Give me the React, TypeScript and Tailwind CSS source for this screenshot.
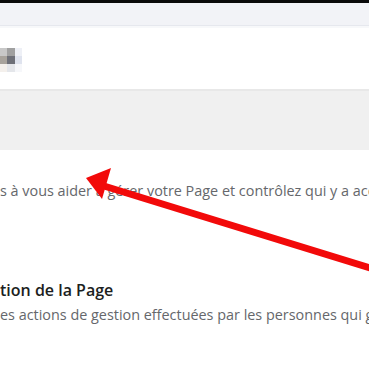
export default function App() {
  return (
    <div className="relative w-[369px] h-[369px] overflow-hidden bg-white font-['Open_Sans',sans-serif]">
      <div className="h-[3px] bg-[#0a0a0a]" />
      <div className="h-[23px] bg-[#f2f3f7] border-b border-[#e6e8ee]" />
      <div className="h-[2px] bg-[#f7f8fa]" />

      {/* page header with blurred avatar */}
      <div className="h-[61px] bg-white pt-[20px]">
        <div className="grid grid-cols-[7px_8px_7px] grid-rows-[8px_8px_8px] w-[22px]">
          <div className="bg-[#c8c8c8]" />
          <div className="bg-[#a0a0a0]" />
          <div className="bg-[#eef0f6]" />
          <div className="bg-[#a8a39c]" />
          <div className="bg-[#6e7078]" />
          <div className="bg-[#dfe3ee]" />
          <div className="bg-[#f4f0ec]" />
          <div className="bg-[#e4e6ea]" />
          <div className="bg-[#f6f7fa]" />
        </div>
      </div>

      <div className="h-[61px] bg-[#f0f0f0] border-t-2 border-[#e8e8e8]" />

      <div className="pt-[31px] whitespace-nowrap">
        <p className="text-[14.4px] leading-[19px] text-[#65676b]">
          s à vous aider à gérer votre Page et contrôlez qui y a accès
        </p>
        <div className="mt-[80px]">
          <p className="text-[16px] leading-[21px] font-semibold text-[#1c1e21]">tion de la Page</p>
          <p className="text-[14.4px] leading-[19px] text-[#65676b] mt-[4px]">
            es actions de gestion effectuées par les personnes qui gèrent votre Page
          </p>
        </div>
      </div>

      {/* red annotation arrow */}
      <svg className="absolute inset-0" width="369" height="369" viewBox="0 0 369 369">
        <line x1="104" y1="186" x2="380" y2="271" stroke="#f20a0a" strokeWidth="7" />
        <polygon points="86,178 111,168 102,199" fill="#f20a0a" />
      </svg>
    </div>
  );
}
